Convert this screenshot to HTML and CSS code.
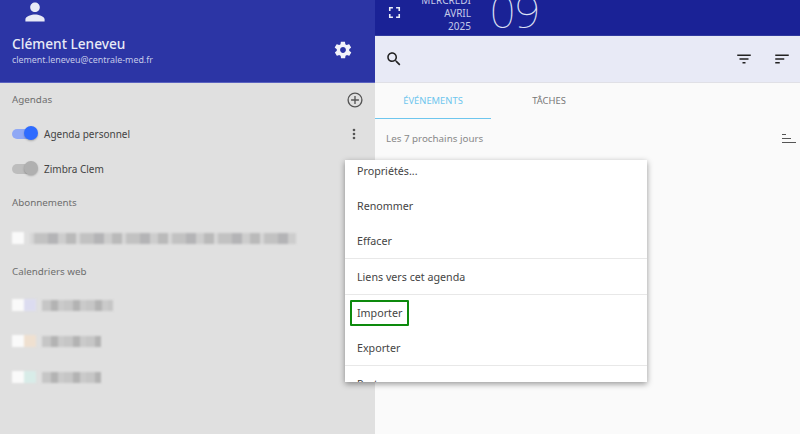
FILE: index.html
```html
<!DOCTYPE html>
<html lang="fr">
<head>
<meta charset="UTF-8">
<meta name="viewport" content="width=device-width, initial-scale=1.0">
<title>Agenda</title>
<link rel="stylesheet" href="styles.css">
</head>
<body>
<div class="app">
  <aside class="side">
    <header class="account">
      <svg class="avatar" viewBox="0 0 24 24"><path d="M12 12c2.700 0 4.800-2.100 4.800-4.800S14.700 2.400 12 2.400 7.200 4.500 7.200 7.200 9.300 12 12 12zm0 2.400c-3.200 0-9.600 1.600-9.600 4.800v2.400h19.200v-2.400c0-3.200-6.400-4.800-9.600-4.800z"/></svg>
      <div class="account-row">
        <div>
          <div class="name">Clément Leneveu</div>
          <div class="mail">clement.leneveu@centrale-med.fr</div>
        </div>
        <svg class="gear" viewBox="0 0 24 24"><path d="M19.400 13c0-.3.100-.6.100-1s0-.7-.1-1l2.100-1.600c.2-.2.200-.4.100-.6l-2-3.500c-.1-.2-.4-.3-.6-.2l-2.500 1c-.5-.4-1.100-.7-1.700-1l-.4-2.600c0-.2-.2-.4-.5-.4h-4c-.3 0-.5.200-.5.400l-.4 2.600c-.6.300-1.200.6-1.700 1l-2.500-1c-.2-.1-.5 0-.6.200l-2 3.500c-.1.200-.1.400.1.600L4.600 11c0 .3-.1.700-.1 1s0 .7.100 1l-2.100 1.600c-.2.200-.2.400-.1.600l2 3.500c.1.200.4.300.6.200l2.500-1c.5.400 1.100.7 1.700 1l.4 2.600c0 .2.200.4.500.4h4c.3 0 .5-.2.500-.4l.4-2.600c.6-.3 1.200-.6 1.700-1l2.500 1c.2.100.5 0 .6-.2l2-3.500c.1-.2.100-.4-.1-.6L19.400 13zM12 15.500c-1.900 0-3.500-1.600-3.500-3.500s1.600-3.500 3.500-3.500 3.500 1.600 3.500 3.500-1.600 3.500-3.500 3.500z"/></svg>
      </div>
    </header>
    <div class="side-body">
      <div class="section section-first">
        <span>Agendas</span>
        <svg class="plus" viewBox="0 0 24 24"><circle cx="12" cy="12" r="9.200"/><path d="M12 6.800v10.400M6.800 12h10.400"/></svg>
      </div>
      <div class="cal-row">
        <span class="toggle on"></span>
        <span class="cal-name">Agenda personnel</span>
        <svg class="dots" viewBox="0 0 24 24"><circle cx="12" cy="6" r="2"/><circle cx="12" cy="12" r="2"/><circle cx="12" cy="18" r="2"/></svg>
      </div>
      <div class="cal-row">
        <span class="toggle"></span>
        <span class="cal-name">Zimbra Clem</span>
      </div>
      <div class="section">Abonnements</div>
      <div class="blur-row">
        <span class="blot blot-white"></span>
        <span class="blot blot-long"></span>
      </div>
      <div class="section section-tight">Calendriers web</div>
      <div class="blur-row">
        <span class="blot blot-white"></span>
        <span class="blot blot-tint tint-blue"></span>
        <span class="blot blot-text blot-wide"></span>
      </div>
      <div class="blur-row">
        <span class="blot blot-white"></span>
        <span class="blot blot-tint tint-orange"></span>
        <span class="blot blot-text"></span>
      </div>
      <div class="blur-row">
        <span class="blot blot-white"></span>
        <span class="blot blot-tint tint-green"></span>
        <span class="blot blot-text"></span>
      </div>
    </div>
  </aside>

  <main class="main">
    <div class="datebar">
      <svg class="fullscreen" viewBox="0 0 24 24"><path d="M7 14H5v5h5v-2H7v-3zm-2-4h2V7h3V5H5v5zm12 7h-3v2h5v-5h-2v3zM14 5v2h3v3h2V5h-5z"/></svg>
      <div class="date-text">
        <div>MERCREDI</div>
        <div>AVRIL</div>
        <div>2025</div>
      </div>
      <div class="date-num">09</div>
    </div>
    <div class="toolbar">
      <svg class="tool" viewBox="0 0 24 24"><path d="M15.500 14h-.8l-.3-.3c1-1.100 1.600-2.600 1.600-4.200C16 5.900 13.100 3 9.500 3S3 5.900 3 9.500 5.900 16 9.500 16c1.600 0 3.100-.6 4.200-1.600l.3.300v.8l5 5 1.500-1.500-5-5zm-6 0C7 14 5 12 5 9.500S7 5 9.500 5 14 7 14 9.500 12 14 9.500 14z"/></svg>
      <svg class="tool tool-push" viewBox="0 0 24 24"><path d="M10 18h4v-2h-4v2zM3 6v2h18V6H3zm3 7h12v-2H6v2z"/></svg>
      <svg class="tool" viewBox="0 0 24 24"><path d="M3 18h6v-2H3v2zM3 6v2h18V6H3zm0 7h12v-2H3v2z"/></svg>
    </div>
    <div class="tabs">
      <div class="tab tab-active">ÉVÉNEMENTS</div>
      <div class="tab">TÂCHES</div>
    </div>
    <div class="range">
      <span>Les 7 prochains jours</span>
      <svg class="bars" viewBox="0 0 14 10"><path d="M0 .5h4M0 4.500h9M0 8.500h14"/></svg>
    </div>
  </main>

  <div class="menu">
    <div class="menu-list">
      <div class="menu-item">Propriétés...</div>
      <div class="menu-item">Renommer</div>
      <div class="menu-item">Effacer</div>
      <hr class="menu-line">
      <div class="menu-item">Liens vers cet agenda</div>
      <hr class="menu-line">
      <div class="menu-item">Importer</div>
      <div class="menu-item">Exporter</div>
      <hr class="menu-line">
      <div class="menu-item">Partage</div>
    </div>
    <div class="menu-mark"></div>
  </div>
</div>
</body>
</html>
```

FILE: styles.css
```css
html, body {
  margin: 0;
  padding: 0;
  height: 100%;
  overflow: hidden;
}
body {
  font-family: "Noto Sans", "Open Sans", sans-serif;
  color: #444;
}
.app {
  display: flex;
  height: 434px;
  position: relative;
  overflow: hidden;
}

/* left column */
.side {
  width: 375px;
  flex: none;
  display: flex;
  flex-direction: column;
  background: #e0e0e0;
}
.account {
  height: 82px;
  background: #2c35a5;
  border-bottom: 1px solid #5a62c0;
  padding: 0 12px;
  color: #e8eaf6;
}
.avatar {
  display: block;
  width: 24px;
  height: 24px;
  margin-left: 11px;
  fill: #e8eaf6;
}
.account-row {
  display: flex;
  justify-content: space-between;
  align-items: flex-start;
  margin-top: 10px;
  padding-right: 10px;
}
.name {
  font-size: 13.700px;
  font-weight: 500;
  line-height: 20px;
}
.mail {
  font-size: 8.900px;
  line-height: 12px;
  color: #c5cae9;
}
.gear {
  width: 20px;
  height: 20px;
  margin-top: 6px;
  fill: #f2f3fa;
}
.side-body {
  padding: 0 12px;
}
.section {
  height: 34px;
  padding-bottom: 2px;
  box-sizing: border-box;
  display: flex;
  align-items: center;
  justify-content: space-between;
  font-size: 9.800px;
  color: #6e6e6e;
}
.section-first {
  height: 33px;
  padding-bottom: 0;
}
.section-tight {
  height: 31px;
  padding-bottom: 1px;
}
.plus {
  width: 18px;
  height: 18px;
  margin-right: -1px;
  fill: none;
  stroke: #555;
  stroke-width: 1.800;
}
.cal-row {
  height: 35px;
  display: flex;
  align-items: center;
  font-size: 10px;
  color: #444;
}
.cal-name {
  margin-left: 6px;
}
.toggle {
  width: 26px;
  height: 15px;
  flex: none;
  position: relative;
}
.toggle::before {
  content: "";
  display: block;
  width: 24px;
  height: 10px;
  margin: 2.500px 0 0 0;
  border-radius: 5px;
  background: #bdbdbd;
}
.toggle::after {
  content: "";
  position: absolute;
  right: 0;
  top: 0;
  width: 14px;
  height: 14px;
  border-radius: 50%;
  background: #b0b0b0;
  box-shadow: 0 1px 2px rgba(0,0,0,.25);
}
.toggle.on::before {
  background: #8fa8f5;
}
.toggle.on::after {
  background: #2e6bff;
}
.dots {
  width: 16px;
  height: 16px;
  margin-left: auto;
  margin-right: 1px;
  fill: #555;
}
.blur-row {
  height: 36px;
  display: flex;
  align-items: center;
  gap: 6px;
  filter: blur(1px);
}
.blur-row .blot-white + .blot-tint {
  margin-left: -6px;
}
.blot {
  display: block;
  height: 12px;
}
.blot-white {
  width: 12px;
  background: #fafafa;
}
.blot-tint {
  width: 12px;
}
.tint-blue { background: #dcdcf0; }
.tint-orange { background: #efe0d0; }
.tint-green { background: #d8ece8; }
.blot-long {
  width: 266px;
  height: 11px;
  background: repeating-linear-gradient(90deg, #d6d6d6 0 4px, #c2c2c2 4px 18px, #b4b4b6 18px 28px, #cdcdcd 28px 36px, #bababa 36px 46px);
}
.blot-text {
  width: 59px;
  height: 11px;
  background: repeating-linear-gradient(90deg, #c6c6c6 0 9px, #b3b3b3 9px 16px, #cacaca 16px 22px);
}
.blot-wide {
  width: 71px;
}

/* right column */
.main {
  flex: 1;
  display: flex;
  flex-direction: column;
  background: #fafafa;
}
.datebar {
  height: 35px;
  background: #1a2296;
  border-bottom: 1px solid #303a9f;
  display: flex;
  align-items: flex-end;
  overflow: hidden;
  color: #c5cae9;
}
.fullscreen {
  width: 19px;
  height: 19px;
  margin: 0 0 13px 10px;
  flex: none;
  fill: #eceef8;
}
.date-text {
  width: 67px;
  flex: none;
  text-align: right;
  font-size: 10px;
  line-height: 13px;
  padding-bottom: 2px;
}
.date-num {
  margin: 0 0 1px 19px;
  font-weight: 100;
  font-size: 44px;
  line-height: 46px;
  color: #dfe2f5;
}
.toolbar {
  height: 46px;
  background: #e8eaf6;
  border-bottom: 1px solid #e0e0e6;
  display: flex;
  align-items: center;
  padding: 0 9px 0 10px;
  gap: 20px;
}
.tool {
  width: 18px;
  height: 18px;
  fill: #222;
}
.tool-push {
  margin-left: auto;
}
.tabs {
  display: flex;
  height: 36px;
  font-size: 9.400px;
}
.tab {
  width: 116px;
  line-height: 35px;
  text-align: center;
  color: #777;
}
.tab-active {
  color: #6ec6ee;
  border-bottom: 1px solid #6ec6ee;
}
.range {
  display: flex;
  align-items: center;
  justify-content: space-between;
  height: 40px;
  box-sizing: border-box;
  padding: 0 4px 2px 11px;
  font-size: 9.800px;
  color: #888;
}
.bars {
  width: 14px;
  height: 10px;
  margin-top: 2px;
  fill: none;
  stroke: #555;
  stroke-width: 1;
}

/* dropdown over the page */
.menu {
  position: absolute;
  left: 345px;
  top: 160px;
  width: 302px;
  height: 222px;
  background: #fff;
  overflow: hidden;
  box-shadow: 0 2px 6px rgba(0,0,0,.4);
}
.menu-list {
  margin-top: -7px;
}
.menu-item {
  height: 35px;
  box-sizing: border-box;
  padding: 1px 0 0 12px;
  line-height: 35px;
  font-size: 10.700px;
  color: #444;
}
.menu-line {
  height: 1px;
  margin: 0;
  border: 0;
  background: #e8e8e8;
}
.menu-mark {
  position: absolute;
  left: 5px;
  top: 140px;
  width: 55px;
  height: 22px;
  border: 2px solid #0d8a0d;
  border-radius: 1px;
}
```
